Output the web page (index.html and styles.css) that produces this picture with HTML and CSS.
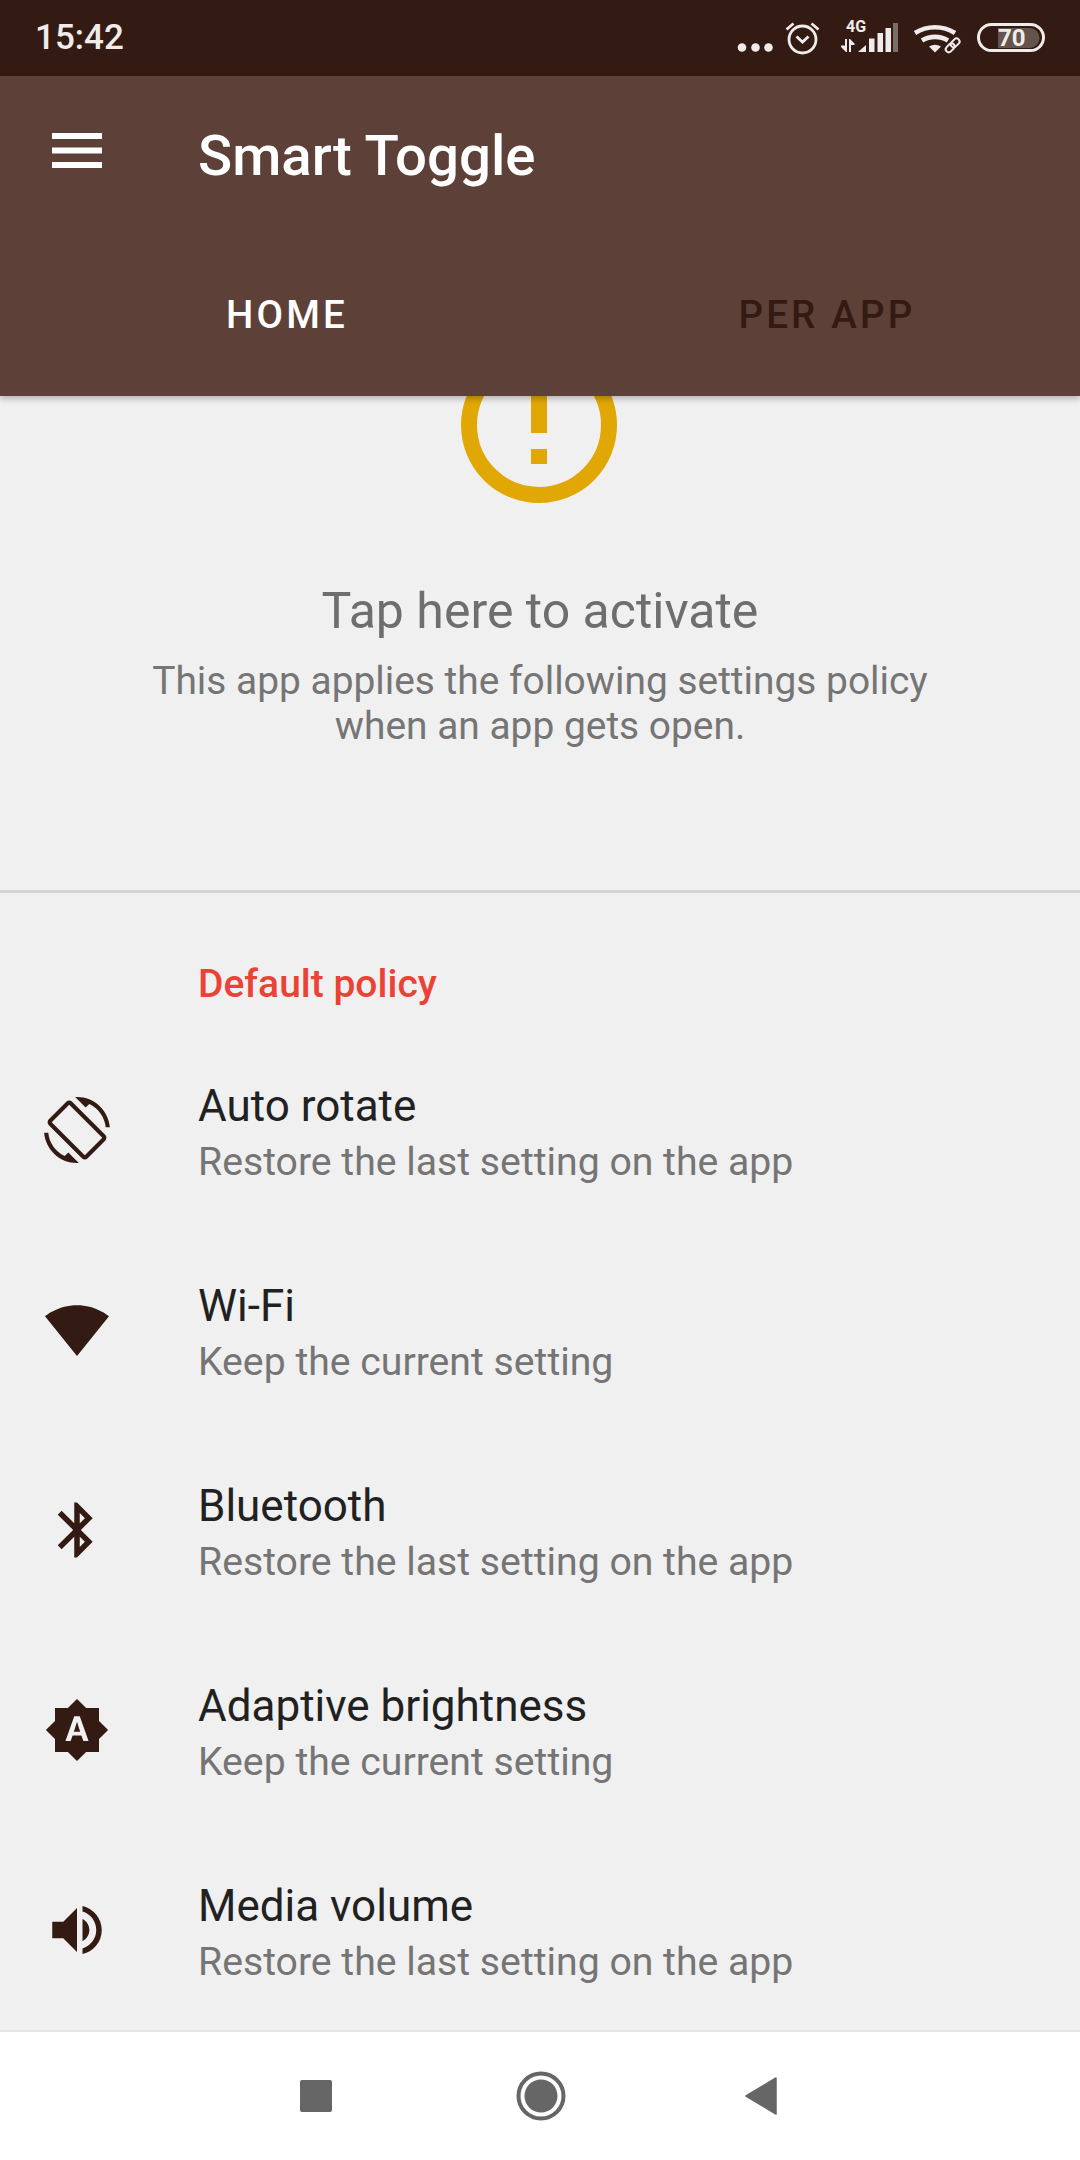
FILE: index.html
```html
<!DOCTYPE html>
<html>
<head>
<meta charset="utf-8">
<link rel="stylesheet" href="styles.css">
</head>
<body>
<div class="screen">
  <div class="status">
    <span class="time">15:42</span>
    <svg class="status-icons" width="360" height="52" viewBox="700 12 360 52">
      <g fill="#f0eceb"><circle cx="742" cy="47.500" r="4.300"/><circle cx="755.500" cy="47.500" r="4.300"/><circle cx="768.500" cy="47.500" r="4.300"/></g>
      <g fill="none" stroke="#f0eceb" stroke-width="2.800"><circle cx="802.500" cy="39.500" r="13.500"/><path d="M796.500 36.500l6 5.500 6-5.500"/><path d="M786.500 29.500l7-6M818.500 29.500l-7-6"/></g>
      <g fill="#f0eceb">
        <path d="M845 39h2v13h-1l-5-5v-1.500h4zM849 52V39h1l4.500 4.500V45H851v7z"/>
        <path d="M858 52l8-7v7z"/><rect x="869" y="38.500" width="5.500" height="13.500"/><rect x="877.500" y="33" width="5.500" height="19"/><rect x="885.500" y="28" width="5.500" height="24"/>
      </g>
      <rect x="893" y="23" width="5" height="29" fill="#7b6d68"/>
      <text class="tiny" x="846" y="32">4G</text>
      <g fill="none" stroke="#f0eceb" stroke-width="4.600"><path d="M915 33a38 38 0 0 1 40 0"/><path d="M922 40.500a25 25 0 0 1 26 0"/></g>
      <path d="M929 46.500a12 12 0 0 1 12 0l-6 6z" fill="#f0eceb"/>
      <g fill="none" stroke="#f0eceb" stroke-width="2" transform="rotate(-45 953 45)"><rect x="944" y="42" width="10" height="6" rx="3"/><rect x="951" y="42" width="10" height="6" rx="3"/></g>
      <rect x="978.500" y="24.500" width="65" height="26" rx="13" fill="none" stroke="#f0eceb" stroke-width="3"/>
      <path d="M998 28h32a9.500 10 0 0 1 9.500 10v0a9.500 10 0 0 1-9.500 10h-32z" fill="#65534e"/>
      <text class="batt" x="998" y="46">70</text>
    </svg>
  </div>

  <header class="appbar">
    <div class="toolbar">
      <svg class="menu" width="50" height="35" viewBox="0 0 50 35"><g fill="#fff"><rect width="50" height="6" y="0"/><rect width="50" height="6" y="14.500"/><rect width="50" height="6" y="29"/></g></svg>
      <span class="title">Smart Toggle</span>
    </div>
    <div class="tabs">
      <span class="tab active">HOME</span>
      <span class="tab">PER APP</span>
    </div>
  </header>

  <main class="content">
    <section class="activate">
      <svg class="warn" width="160" height="160" viewBox="0 0 160 160">
        <circle cx="80" cy="80" r="70" fill="none" stroke="#e0a705" stroke-width="16"/>
        <rect x="72" y="24" width="16" height="64" fill="#e0a705"/>
        <rect x="72" y="104" width="16" height="15" fill="#e0a705"/>
      </svg>
      <div class="act-title">Tap here to activate</div>
      <div class="act-text">This app applies the following settings policy<br>when an app gets open.</div>
    </section>
    <section class="policy">
      <div class="policy-head">Default policy</div>
      <div class="row">
        <svg class="ico" width="66" height="66" viewBox="0 0 24 24"><path fill="#331a13" d="M16.480 2.520c3.270 1.550 5.610 4.720 5.970 8.480h1.500C23.440 4.840 18.290 0 12 0l-.66.030 3.810 3.810 1.330-1.320zm-6.250-.77c-.59-.59-1.540-.59-2.120 0L1.750 8.110c-.59.590-.59 1.540 0 2.120l12.020 12.020c.59.590 1.540.590 2.120 0l6.360-6.360c.59-.59.590-1.540 0-2.120L10.230 1.750zm4.600 19.440L2.810 9.170l6.360-6.360 12.020 12.020-6.360 6.360zm-7.310.290C4.250 19.940 1.910 16.760 1.550 13H.05C.56 19.160 5.710 24 12 24l.66-.03-3.810-3.810-1.330 1.320z"/></svg>
        <div class="row-text"><div class="row-title">Auto rotate</div><div class="row-sub">Restore the last setting on the app</div></div>
      </div>
      <div class="row">
        <svg class="ico" width="66" height="66" viewBox="0 0 24 24"><path fill="#331a13" d="M12.010 21.490L23.640 7c-.45-.34-4.930-4-11.640-4C5.280 3 .81 6.660.36 7l11.640 14.490.01.01.01-.01z"/></svg>
        <div class="row-text"><div class="row-title">Wi-Fi</div><div class="row-sub">Keep the current setting</div></div>
      </div>
      <div class="row">
        <svg class="ico" width="66" height="66" viewBox="0 0 24 24"><path fill="#331a13" d="M17.710 7.710L12 2h-1v7.590L6.410 5 5 6.410 10.590 12 5 17.590 6.410 19 11 14.410V22h1l5.710-5.710-4.300-4.290 4.300-4.290zM13 5.830l1.880 1.880L13 9.590V5.830zm1.880 10.460L13 18.170v-3.760l1.880 1.880z"/></svg>
        <div class="row-text"><div class="row-title">Bluetooth</div><div class="row-sub">Restore the last setting on the app</div></div>
      </div>
      <div class="row">
        <svg class="ico" width="66" height="66" viewBox="0 0 24 24"><path fill="#331a13" d="M10.850 12.650h2.300L12 9l-1.150 3.650zM20 8.690V4h-4.690L12 .69 8.690 4H4v4.690L.69 12 4 15.310V20h4.690L12 23.310 15.310 20H20v-4.690L23.310 12 20 8.690zM14.300 16l-.7-2h-3.200l-.7 2H7.800l3.200-9h2l3.200 9h-1.900z"/></svg>
        <div class="row-text"><div class="row-title">Adaptive brightness</div><div class="row-sub">Keep the current setting</div></div>
      </div>
      <div class="row">
        <svg class="ico" width="66" height="66" viewBox="0 0 24 24"><path fill="#331a13" d="M3 9v6h4l5 5V4L7 9H3zm13.500 3c0-1.770-1.020-3.290-2.500-4.030v8.050c1.480-.73 2.500-2.250 2.500-4.020zM14 3.230v2.060c2.890.86 5 3.540 5 6.710s-2.110 5.850-5 6.710v2.060c4.010-.91 7-4.490 7-8.770s-2.990-7.860-7-8.770z"/></svg>
        <div class="row-text"><div class="row-title">Media volume</div><div class="row-sub">Restore the last setting on the app</div></div>
      </div>
    </section>
  </main>

  <nav class="navbar">
    <span class="nav-square"></span>
    <svg width="52" height="52" viewBox="0 0 52 52"><circle cx="26" cy="26" r="22.500" fill="none" stroke="#666" stroke-width="4"/><circle cx="26" cy="26" r="16.500" fill="#666"/></svg>
    <svg width="34" height="38" viewBox="0 0 34 38"><path d="M32 1L2 19l30 18z" fill="#666" stroke="#666" stroke-width="1.500" stroke-linejoin="round"/></svg>
  </nav>
</div>
</body>
</html>
```
FILE: styles.css
```css
* { box-sizing: border-box; }
html, body { margin: 0; padding: 0; }
body { width: 1080px; height: 2160px; overflow: hidden; font-family: Roboto, "Noto Sans", sans-serif; background: #f0f0f0; }
.screen { width: 1080px; height: 2160px; overflow: hidden; display: flex; flex-direction: column; position: relative; }
.status { height: 76px; flex: none; background: #331a13; display: flex; align-items: center; justify-content: space-between; padding-left: 35px; position: relative; }
.time { color: #f0eceb; font-size: 35px; font-weight: 500; line-height: 76px; }
.status-icons { display: block; margin-right: 20px; flex: none; }
.tiny { font: 700 16px Roboto, sans-serif; fill: #f0eceb; }
.batt { font: 700 24px Roboto, sans-serif; fill: #f0eceb; }
.appbar { height: 320px; flex: none; background: #5d4037; box-shadow: 0 3px 6px rgba(0,0,0,.25); position: relative; z-index: 2; overflow: hidden; }
.toolbar { height: 160px; display: flex; align-items: center; padding-left: 52px; }
.menu { display: block; margin: -11px 96px 0 0; flex: none; }
.title { color: #fff; font-size: 56.400px; font-weight: 500; }
.tabs { height: 160px; width: 1080px; margin-left: 17px; display: flex; }
.tab { flex: 1; text-align: center; color: #331a13; font-size: 38.500px; font-weight: 500; letter-spacing: 3.200px; line-height: 72px; padding-top: 43px; }
.tab.active { color: #fff; }
.content { flex: 1; display: flex; flex-direction: column; min-height: 0; }
.activate { height: 548px; flex: none; border-bottom: 3px solid #d4d4d4; display: flex; flex-direction: column; align-items: center; text-align: center; margin-top: -51px; position: relative; }
.warn { display: block; flex: none; margin-left: -2px; }
.act-title { color: #6e6e6e; font-size: 50px; line-height: 64px; margin-top: 74px; }
.act-text { color: #757575; font-size: 38.900px; line-height: 45px; margin-top: 15px; }
.policy { flex: 1; }
.policy-head { color: #ea4335; font-size: 39px; font-weight: 500; line-height: 52px; padding: 65px 0 0 198px; margin-bottom: 68px; }
.row { height: 200px; display: flex; align-items: flex-start; }
.ico { display: block; flex: none; margin: 19px 88px 0 44px; }
.row-title { color: #212121; font-size: 44px; line-height: 56px; }
.row-sub { color: #757575; font-size: 39.200px; line-height: 50px; margin-top: 3px; }
.navbar { height: 130px; flex: none; background: #fff; border-top: 2px solid #e4e4e4; display: flex; align-items: center; justify-content: center; column-gap: 177px; padding-right: 2px; position: relative; z-index: 2; }
.nav-square { width: 32px; height: 32px; margin-right: 6px; background: #666; border-radius: 2px; display: block; }
```
